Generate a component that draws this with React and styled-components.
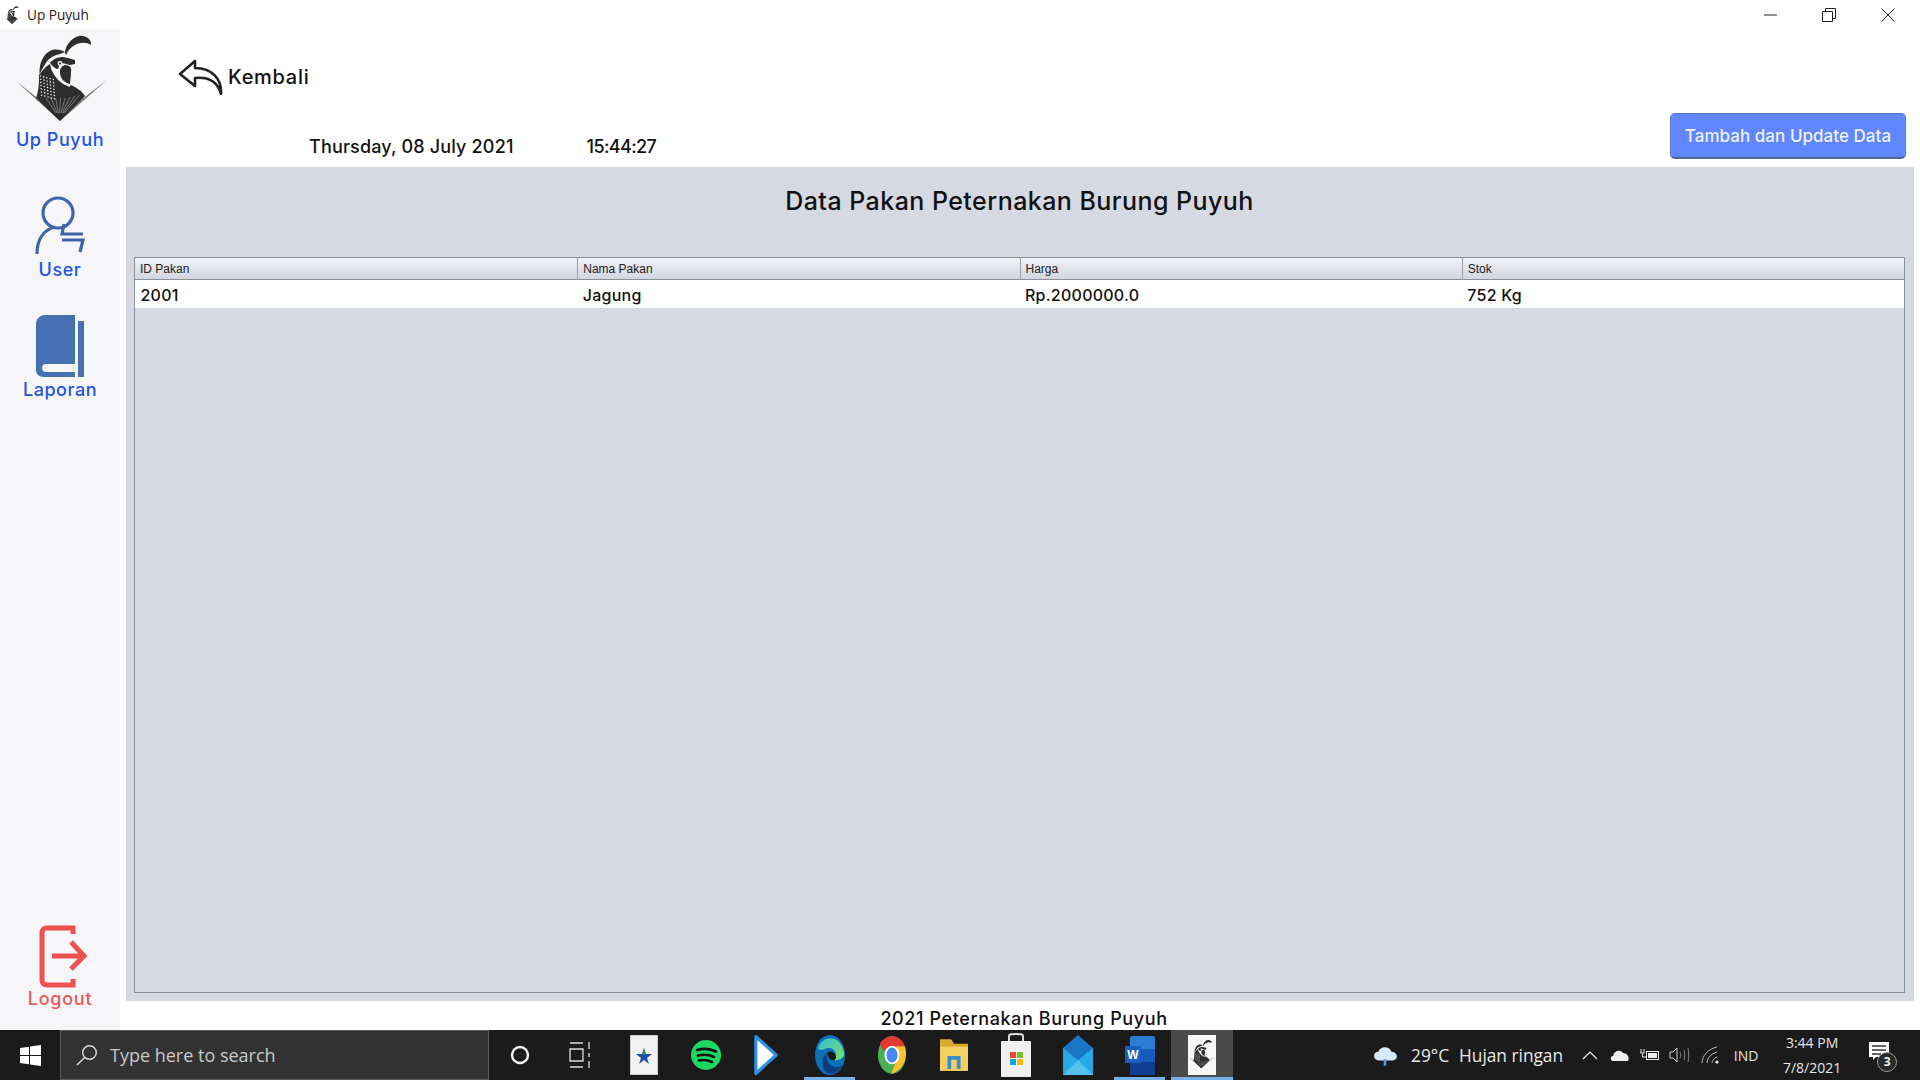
import React from "react";
import styled, { createGlobalStyle } from "styled-components";

const Global = createGlobalStyle`
  html, body { margin: 0; padding: 0; background: #fff; }
  #root { width: 1920px; height: 1080px; overflow: hidden; }
  * { box-sizing: border-box; }
`;
const UI = `"Inter", "Liberation Sans", sans-serif`;
const SYS = `"Open Sans", "Noto Sans", sans-serif`;

const Page = styled.div`width:1920px;height:1080px;display:flex;flex-direction:column;background:#fff;`;
const TitleBar = styled.div`height:29px;display:flex;align-items:center;padding:0 3px 0 5px;font:13.6px ${SYS};color:#222;`;
const TitleText = styled.span`margin-left:7px;flex:1;`;
const WinBtn = styled.div`width:59px;height:29px;display:flex;align-items:center;justify-content:center;`;
const Body = styled.div`flex:1;display:flex;min-height:0;`;
const Sidebar = styled.aside`width:120px;background:#f6f6f8;display:flex;flex-direction:column;align-items:center;`;
const NavItem = styled.div`
  display:flex;flex-direction:column;align-items:center;
  margin-top:${p => p.$top || 0}px;
  ${p => p.$end ? "margin-top:auto;padding-bottom:20px;" : ""}
`;
const NavLabel = styled.span`
  font:500 18px/22px ${UI};letter-spacing:${p => p.$red ? ".75px" : ".55px"};
  color:${p => p.$red ? "#ea5a5c" : "#1f55df"};
  margin-top:${p => p.$gap || 0}px;
`;
const LogoBox = styled.div`height:100px;overflow:visible;`;
const LogoutWrap = styled.div`margin-left:8px;display:flex;`;
const BookWrap = styled.div`margin-left:2px;display:flex;`;
const Content = styled.main`flex:1;display:flex;flex-direction:column;min-width:0;`;
const Header = styled.header`height:138px;display:flex;justify-content:space-between;`;
const LeftHead = styled.div`display:flex;flex-direction:column;`;
const Back = styled.div`display:flex;align-items:center;margin:29px 0 0 58px;height:38px;gap:5px;`;
const BackText = styled.span`font:500 20px/24px ${UI};letter-spacing:.7px;color:#111;`;
const Clock = styled.div`display:flex;margin:39px 0 0 189px;font:500 18px/24px ${UI};letter-spacing:.17px;color:#111;`;
const ClockTime = styled.span`margin-left:73px;letter-spacing:-.6px;`;
const AddButton = styled.button`
  align-self:flex-end;width:236px;height:46px;margin:0 14px 8px 0;padding:0;
  background:#5f86fb;border:1px solid #5b77c8;border-bottom:2px solid #4f6294;border-radius:5px;
  color:#eef2ff;font:500 17px ${UI};letter-spacing:.04px;
`;
const Panel = styled.section`flex:1;margin:0 6px;background:#d6d9e2;display:flex;flex-direction:column;padding:0 9px 8px 8px;min-height:0;`;
const Heading = styled.h1`height:90px;margin:0;padding-top:18px;text-align:center;font:500 25px/32px ${UI};letter-spacing:.45px;color:#111;`;
const TableBox = styled.div`flex:1;border:1px solid #8b8f98;`;
const Row = styled.div`display:grid;grid-template-columns:repeat(4,1fr);`;
const HeadRow = styled(Row)`height:22px;background:linear-gradient(#f1f2f6,#d3d6df);border-bottom:1px solid #8b8f98;`;
const HeadCell = styled.div`
  font:12px/22px "Liberation Sans",sans-serif;color:#222;padding-left:5px;
  & + & { border-left:1px solid #9a9ea8; }
`;
const DataRow = styled(Row)`height:28px;background:#fff;`;
const DataCell = styled.div`font:500 16px/30px ${UI};letter-spacing:.25px;color:#111;padding-left:5.5px;`;
const Footer = styled.footer`height:29px;padding:6px 0 0 8px;text-align:center;font:500 18px/24px ${UI};letter-spacing:.6px;color:#111;`;

const Taskbar = styled.footer`height:50px;background:#1b1b1b;display:flex;align-items:center;color:#e8e8e8;font-family:${SYS};`;
const StartBtn = styled.div`width:60px;height:50px;display:flex;align-items:center;justify-content:center;`;
const Search = styled.div`width:429px;height:50px;background:#333;border:1px solid #5a5a5a;display:flex;align-items:center;padding-left:15px;gap:12px;color:#c9c9c9;font-size:18px;`;
const Slot = styled.div`
  width:62px;height:50px;display:flex;align-items:center;justify-content:center;position:relative;
  background:${p => p.$active ? "#4a4a4a" : "transparent"};
  padding-right:${p => p.$nudge || 0}px;
  &::after {
    content:"";position:absolute;bottom:0;height:3px;background:#76b0e6;
    left:${p => p.$active ? 0 : 5}px;right:${p => p.$active ? 0 : 6}px;
    display:${p => p.$line ? "block" : "none"};
  }
`;
const Tray = styled.div`flex:1;display:flex;align-items:center;height:50px;padding-left:138px;position:relative;`;
const TrayIcon = styled.div`display:flex;align-items:center;justify-content:center;width:30px;margin-left:${p => p.$ml || 0}px;`;
const CloudIcon = styled.div`display:flex;width:28px;`;
const Weather = styled.span`font-size:17.3px;margin-left:${p => p.$ml || 0}px;white-space:nowrap;`;
const Ind = styled.span`font-size:14px;width:44px;text-align:center;margin-left:-1px;`;
const DateBox = styled.div`width:92px;margin-left:-2px;text-align:center;font-size:14px;line-height:25px;`;
const Notify = styled.div`position:relative;margin-left:11px;width:26px;height:26px;`;
const Badge = styled.span`
  position:absolute;left:8px;top:10px;width:20px;height:20px;border-radius:50%;
  background:#2b2b2b;border:1px solid #999;font:700 12px/18px ${SYS};text-align:center;color:#eee;
`;

const Quail = ({ size = 120, h = 105, full = true }) => (
  <svg width={size} height={h} viewBox={full ? "0 29 120 105" : "26 32 72 92"}>
    <path d="M16 81L60 121L107 80L60 116Z" fill="#777" />
    <path d="M39 75C42 71 46 66 50 64C52 73 58 82 70 85C76 87 82 91 85 96L60 121L36 98C39 90 39 82 39 75Z" fill="#2d2d2d" />
    <path d="M39.5 74C39 62 44 53 52 50C57 49 62 50 65 52L60 54C55 55 51 57 48 60C44 65 42 70 39.5 74Z" fill="#2d2d2d" />
    <path d="M65 53C65 46 71 38 79 36C85 35 92 39 91 45C87 42 80 42 75 45C71 47 68 50 66 55Z" fill="#2d2d2d" />
    <path d="M50 63C53 59 58 57 63 57L68 58L75 60L75 64L70 65L66 64C64 63 62 63 60 64L58 69C56 69 53 67 50 63Z" fill="#2d2d2d" />
    <path d="M65 65C70 65 72 68 71 72C71 77 70 81 70 84C64 83 60 78 60 72C60 68 62 66 65 65Z" fill="#2d2d2d" />
    <circle cx="60" cy="63.5" r="2.4" fill="#f6f6f8" />
    <circle cx="60" cy="63.5" r="1.1" fill="#222" />
    <g fill="#eee">
      {[0,1,2,3,4,5,6].map(r => [0,1,2,3,4].map(c => (
        <circle key={r+"-"+c} cx={40.5 + c*3.2 + r*0.2} cy={76 + r*3.2 + c*0.9} r="0.8" />
      )))}
    </g>
    <path d="M52 68C55 76 61 83 70 86" fill="none" stroke="#f6f6f8" strokeWidth="2.2" />
    <g stroke="#9a9a9a" strokeWidth=".7">
      {[0,1,2,3,4,5,6,7].map(i => <line key={i} x1={46+i*4.8} y1={98-(i>4?(i-4)*1:0)} x2={56+i*1.2} y2={113} />)}
    </g>
  </svg>
);

const UserIcon = () => (
  <svg width="50" height="62" viewBox="0 0 50 62" fill="none" stroke="#3f63ad" strokeWidth="3.2">
    <circle cx="23" cy="19" r="15" />
    <path d="M2 60C2 46 8 36 20 33" />
    <path d="M29 30L27 40H48M27 46H48L45 58" />
  </svg>
);
const BookIcon = () => (
  <svg width="50" height="63" viewBox="0 0 50 63">
    <path d="M9 0H39V49H10C7 49 6 51 6 53C6 55 7 57 10 57H39V62H8C3 62 0 59 0 55V9C0 4 4 0 9 0Z" fill="#4670b4" />
    <path d="M42 6H48V62H42Z" fill="#4670b4" />
  </svg>
);
const LogoutIcon = () => (
  <svg width="50" height="63" viewBox="0 0 50 63" fill="none" stroke="#ef5050" strokeWidth="5">
    <path d="M34 9V3H8C5 3 3 5 3 8V55C3 58 5 60 8 60H34V54" />
    <path d="M13 31H45M32 17L45 31L32 44" />
  </svg>
);

const Tile = ({ children, w = 34, h = 42, vb = "0 0 34 42" }) => <svg width={w} height={h} viewBox={vb}>{children}</svg>;

export default function App() {
  return (
    <Page>
      <Global />
      <TitleBar>
        <Quail size={15} h={20} full={false} />
        <TitleText>Up Puyuh</TitleText>
        <WinBtn><svg width="14" height="14"><path d="M1 7H14" stroke="#222" /></svg></WinBtn>
        <WinBtn><svg width="14" height="14" fill="none" stroke="#222"><path d="M.5 3.5H10.5V13.5H.5ZM3.5 3V.5H13.5V10.5H11" /></svg></WinBtn>
        <WinBtn><svg width="14" height="14" stroke="#222"><path d="M.5 .5L13.5 13.5M13.5 .5L.5 13.5" /></svg></WinBtn>
      </TitleBar>
      <Body>
        <Sidebar>
          <NavItem>
            <LogoBox><Quail /></LogoBox>
            <NavLabel>Up Puyuh</NavLabel>
          </NavItem>
          <NavItem $top={43}>
            <UserIcon />
            <NavLabel $gap={3}>User</NavLabel>
          </NavItem>
          <NavItem $top={34}>
            <BookWrap><BookIcon /></BookWrap>
            <NavLabel $gap={1}>Laporan</NavLabel>
          </NavItem>
          <NavItem $end>
            <LogoutWrap><LogoutIcon /></LogoutWrap>
            <NavLabel $red>Logout</NavLabel>
          </NavItem>
        </Sidebar>
        <Content>
          <Header>
            <LeftHead>
              <Back>
                <svg width="45" height="36" viewBox="0 0 45 36" fill="none" stroke="#222" strokeWidth="2.6">
                  <path d="M17 2L2 15L17 27V19C28 18 39 20 43 35C44 20 34 9 17 9Z" strokeLinejoin="round" />
                </svg>
                <BackText>Kembali</BackText>
              </Back>
              <Clock>
                <span>Thursday, 08 July 2021</span>
                <ClockTime>15:44:27</ClockTime>
              </Clock>
            </LeftHead>
            <AddButton>Tambah dan Update Data</AddButton>
          </Header>
          <Panel>
            <Heading>Data Pakan Peternakan Burung Puyuh</Heading>
            <TableBox>
              <HeadRow>
                <HeadCell>ID Pakan</HeadCell>
                <HeadCell>Nama Pakan</HeadCell>
                <HeadCell>Harga</HeadCell>
                <HeadCell>Stok</HeadCell>
              </HeadRow>
              <DataRow>
                <DataCell>2001</DataCell>
                <DataCell>Jagung</DataCell>
                <DataCell>Rp.2000000.0</DataCell>
                <DataCell>752 Kg</DataCell>
              </DataRow>
            </TableBox>
          </Panel>
          <Footer>2021 Peternakan Burung Puyuh</Footer>
        </Content>
      </Body>
      <Taskbar>
        <StartBtn>
          <svg width="21" height="21" viewBox="0 0 21 21" fill="#fff"><path d="M0 3L9 1.7V10H0ZM10 1.5L21 0V10H10ZM0 11H9V19.3L0 18ZM10 11H21V21L10 19.5Z" /></svg>
        </StartBtn>
        <Search>
          <svg width="22" height="22" viewBox="0 0 22 22" fill="none" stroke="#ddd" strokeWidth="1.4"><circle cx="13.5" cy="8.5" r="6.8" /><path d="M8.6 13.4L1 21" /></svg>
          <span>Type here to search</span>
        </Search>
        <Slot>
          <svg width="20" height="20" fill="none" stroke="#eee" strokeWidth="2.4"><circle cx="10" cy="10" r="8" /></svg>
        </Slot>
        <Slot $nudge={5}>
          <svg width="22" height="28" viewBox="0 0 22 28" fill="none" stroke="#ddd" strokeWidth="1.3"><path d="M1 2H14M1 26H14M1 8H14V20H1ZM20 1V8M20 20V27M20 12V16" /></svg>
        </Slot>
        <Slot>
          <Tile w={28} h={40} vb="0 0 28 40">
            <rect width="28" height="40" fill="#f1f1f1" stroke="#aaa" />
            <path d="M14 13L16 19H22L17 23L19 29L14 25L9 29L11 23L6 19H12Z" fill="#1d4fa3" />
            <path d="M14 13L16 19L13 20Z" fill="#2f9e52" />
          </Tile>
        </Slot>
        <Slot>
          <svg width="32" height="32" viewBox="0 0 32 32" fill="none">
            <circle cx="16" cy="16" r="15" fill="#1ed760" />
            <path d="M7 11C14 9 20 9.5 26 12.5M8 16.5C14 15 19 15.5 24 18M9 21.5C14 20.5 18 21 22 23" stroke="#111" strokeWidth="2.6" strokeLinecap="round" />
          </svg>
        </Slot>
        <Slot $nudge={4}>
          <svg width="24" height="42" viewBox="0 0 26 44"><path d="M2 2L24 22L2 42Z" fill="#fff" stroke="#2f8fe0" strokeWidth="3.5" strokeLinejoin="round" /></svg>
        </Slot>
        <Slot $line>
          <svg width="32" height="42" viewBox="0 0 32 42">
            <defs>
              <linearGradient id="edgeG" x1="0" y1="0" x2="1" y2="1"><stop offset="0" stopColor="#2fbfd8" /><stop offset="1" stopColor="#7fe06c" /></linearGradient>
            </defs>
            <ellipse cx="16" cy="21" rx="15" ry="20" fill="#0f6fb8" />
            <path d="M4 14C7 3 25 -2 30 18C31 25 24 27 20 26C25 21 20 13 14 14C9 15 6 18 4 14Z" fill="url(#edgeG)" />
            <path d="M13 19C11 28 18 36 28 32C24 40 16 42 12 38C7 33 7 23 13 19Z" fill="#0a3f7e" />
            <path d="M13 19C16 16 22 18 22 24C20 28 15 27 13 19Z" fill="#1b1b1b" />
          </svg>
        </Slot>
        <Slot>
          <svg width="28" height="40" viewBox="0 0 30 40">
            <ellipse cx="15" cy="20" rx="15" ry="20" fill="#4caf50" />
            <path d="M15 0C21 0 26 3 29 11H15C11 11 8 13 6 16L2 8C5 3 10 0 15 0Z" fill="#e53935" />
            <path d="M29 11C31 18 30 28 24 34C20 38 16 40 14 40L20 26L22 20C22 16 20 13 18 11Z" fill="#fbc02d" />
            <ellipse cx="15" cy="20" rx="8" ry="10" fill="#fff" />
            <ellipse cx="15" cy="20" rx="6" ry="8" fill="#4a8af4" />
          </svg>
        </Slot>
        <Slot>
          <svg width="28" height="32" viewBox="0 0 30 34">
            <path d="M0 0H12L15 5H30V34H0Z" fill="#d9a92c" />
            <path d="M0 8H30V34H0Z" fill="#f4cf62" />
            <path d="M8 32V18H22V32H18V22H12V32Z" fill="#3d8bd0" />
          </svg>
        </Slot>
        <Slot>
          <svg width="30" height="44" viewBox="0 0 30 44">
            <path d="M8 9V3C8 1 10 1 15 1C20 1 22 1 22 3V9" fill="none" stroke="#ddd" strokeWidth="2" />
            <rect y="8" width="30" height="36" rx="1" fill="#f1f1f1" />
            <rect x="9" y="19" width="6" height="6" fill="#ea4b2d" />
            <rect x="16" y="19" width="6" height="6" fill="#7eb92f" />
            <rect x="9" y="26" width="6" height="6" fill="#1ea0e6" />
            <rect x="16" y="26" width="6" height="6" fill="#fdb813" />
          </svg>
        </Slot>
        <Slot>
          <svg width="30" height="40" viewBox="0 0 30 40">
            <path d="M15 0L30 13V40H0V13Z" fill="#1a76c6" />
            <path d="M0 13L15 25L30 13V40H0Z" fill="#29a8e8" />
            <path d="M0 40L15 25L30 40Z" fill="#52c1f0" />
          </svg>
        </Slot>
        <Slot $line>
          <svg width="30" height="40" viewBox="0 0 30 40">
            <rect x="5" y="1" width="25" height="39" rx="2" fill="#2b7cd3" />
            <rect x="5" y="14" width="25" height="13" fill="#185abd" />
            <rect x="5" y="27" width="25" height="13" fill="#103f91" />
            <rect x="0" y="11" width="16" height="17" rx="1" fill="#1a5fc0" />
            <text x="8" y="24" textAnchor="middle" fontSize="12" fontWeight="700" fontFamily="Liberation Sans" fill="#fff">W</text>
          </svg>
        </Slot>
        <Slot $active $line>
          <svg width="28" height="40" viewBox="0 0 28 40">
            <rect width="28" height="40" fill="#f6f6f6" />
            <g transform="translate(2 3)"><Quail size={24} h={32} full={false} /></g>
          </svg>
        </Slot>
        <Tray>
          <CloudIcon>
            <svg width="28" height="24" viewBox="0 0 26 22"><path d="M7 16C2 16 1 8 7 8C8 3 17 2 19 8C25 8 26 16 20 16Z" fill="#d6e8fa" /><path d="M13 15V21" stroke="#4a9de0" strokeWidth="2.4" /></svg>
          </CloudIcon>
          <Weather $ml={12}>29°C</Weather>
          <Weather $ml={10}>Hujan ringan</Weather>
          <TrayIcon $ml={12}><svg width="16" height="10" fill="none" stroke="#eee" strokeWidth="1.2"><path d="M1 9L8 2L15 9" /></svg></TrayIcon>
          <TrayIcon><svg width="20" height="12" viewBox="0 0 20 12"><path d="M3 12C0 12 0 7 3 7C4 2 10 0 13 4C17 4 20 8 18 12Z" fill="#eee" /></svg></TrayIcon>
          <TrayIcon><svg width="20" height="14" viewBox="0 0 20 14" fill="none" stroke="#eee"><rect x="6.5" y="3.5" width="12" height="8" /><rect x="8" y="5" width="9" height="5" fill="#eee" stroke="none" /><path d="M1 1V5M4 1V5M.5 5H4.5M2.5 6V9H6" /></svg></TrayIcon>
          <TrayIcon><svg width="22" height="18" viewBox="0 0 22 18" fill="none" stroke="#ccc"><path d="M1 6H4L8 2V16L4 12H1Z" /><path d="M11 6C12 8 12 10 11 12M15 4C16 8 16 10 15 14M19 2C20 7 20 11 19 16" stroke="#888" /></svg></TrayIcon>
          <TrayIcon><svg width="20" height="18" viewBox="0 0 20 18" fill="none" stroke="#bbb"><path d="M2 17C2 10 8 3 17 1M7 17C7 12 11 8 17 6M12 17C12 15 14 12 17 11" /><circle cx="17" cy="16" r="1.6" fill="#eee" stroke="none" /></svg></TrayIcon>
          <Ind>IND</Ind>
          <DateBox>3:44 PM<br />7/8/2021</DateBox>
          <Notify>
            <svg width="20" height="18" viewBox="0 0 20 18"><path d="M0 0H20V15H7L4 18V15H0Z" fill="#fff" /><path d="M3 4H17M3 8H17M3 12H12" stroke="#333" strokeWidth="1.3" /></svg>
            <Badge>3</Badge>
          </Notify>
        </Tray>
      </Taskbar>
    </Page>
  );
}
